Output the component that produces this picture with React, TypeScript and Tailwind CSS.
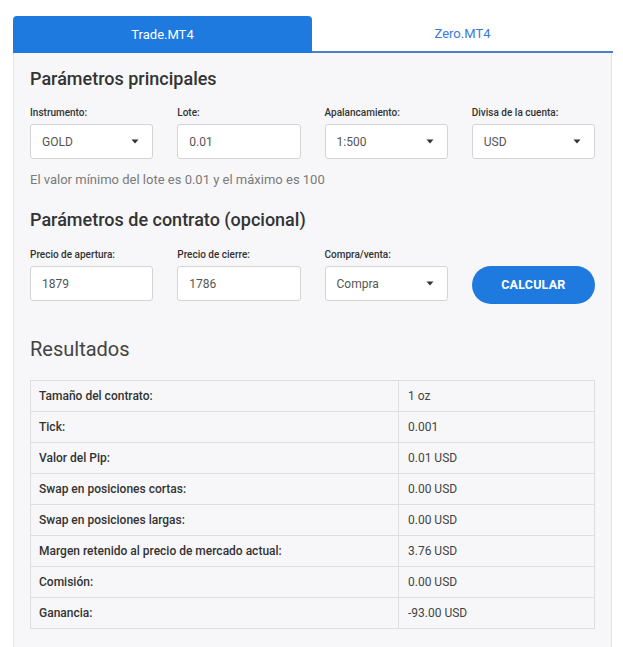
import React from "react";

const Caret = () => (
  <svg width="8" height="5" viewBox="0 0 8 5" className="shrink-0">
    <path d="M0.5 0.5 L7.5 0.5 L4 4.5 Z" fill="#333" />
  </svg>
);

function Field({ label, value, select }: { label: string; value: string; select?: boolean }) {
  return (
    <div className="flex flex-col">
      <div className="text-[10px] leading-[14px] font-medium text-[#333]">{label}</div>
      <div className="mt-[4px] h-[35px] bg-white border border-[#d4d4d4] rounded-[3px] flex items-center justify-between pl-[11px] pr-[13px] text-[12px] text-[#555]">
        <span>{value}</span>
        {select && <Caret />}
      </div>
    </div>
  );
}

const rows: [string, string][] = [
  ["Tamaño del contrato:", "1 oz"],
  ["Tick:", "0.001"],
  ["Valor del Pip:", "0.01 USD"],
  ["Swap en posiciones cortas:", "0.00 USD"],
  ["Swap en posiciones largas:", "0.00 USD"],
  ["Margen retenido al precio de mercado actual:", "3.76 USD"],
  ["Comisión:", "0.00 USD"],
  ["Ganancia:", "-93.00 USD"],
];

export default function App() {
  return (
    <div className="bg-white min-h-[647px] pt-[16px] px-[13px]" style={{ fontFamily: "Roboto, 'Liberation Sans', sans-serif" }}>
      <div className="w-[600px]">
        <div className="flex h-[37px]">
          <div className="w-[299px] bg-[#1f7ae0] rounded-t-[4px] flex items-center justify-center text-white text-[13px]">
            Trade.MT4
          </div>
          <div className="flex-1 border-b-2 border-[#4a82c4] flex items-center justify-center text-[#3a7bd5] text-[13px]">
            Zero.MT4
          </div>
        </div>
        <div className="w-[599px] bg-[#f7f7f9] border-l border-r border-[#e4e4e6] px-[16px] pt-[14px] pb-[30px]">
          <h2 className="text-[18px] leading-[24px] font-medium text-[#333]">Parámetros principales</h2>
          <div className="grid grid-cols-4 gap-x-[24px] mt-[15px]">
            <Field label="Instrumento:" value="GOLD" select />
            <Field label="Lote:" value="0.01" />
            <Field label="Apalancamiento:" value="1:500" select />
            <Field label="Divisa de la cuenta:" value="USD" select />
          </div>
          <p className="mt-[12px] text-[13px] leading-[18px] text-[#7a7a7a]">
            El valor mínimo del lote es 0.01 y el máximo es 100
          </p>
          <h2 className="mt-[19px] text-[18px] leading-[24px] font-medium text-[#333]">
            Parámetros de contrato (opcional)
          </h2>
          <div className="grid grid-cols-4 gap-x-[24px] mt-[16px] items-end">
            <Field label="Precio de apertura:" value="1879" />
            <Field label="Precio de cierre:" value="1786" />
            <Field label="Compra/venta:" value="Compra" select />
            <div className="flex flex-col">
              <div className="h-[14px]" />
              <button className="mt-[4px] h-[38px] rounded-full bg-[#1f7ae0] text-white text-[12.5px] font-bold tracking-[0.2px] -mb-[3px]">
                CALCULAR
              </button>
            </div>
          </div>
          <h3 className="mt-[34px] text-[20px] leading-[28px] font-normal text-[#444]">Resultados</h3>
          <div className="mt-[17px] border-t border-l border-[#dedee0]">
            {rows.map(([k, v]) => (
              <div key={k} className="flex h-[31px] border-b border-[#dedee0]">
                <div className="w-[368px] border-r border-[#dedee0] flex items-center pl-[8px] text-[12px] font-medium text-[#333]">
                  {k}
                </div>
                <div className="flex-1 border-r border-[#dedee0] flex items-center pl-[9px] text-[12px] text-[#444]">
                  {v}
                </div>
              </div>
            ))}
          </div>
        </div>
      </div>
    </div>
  );
}
